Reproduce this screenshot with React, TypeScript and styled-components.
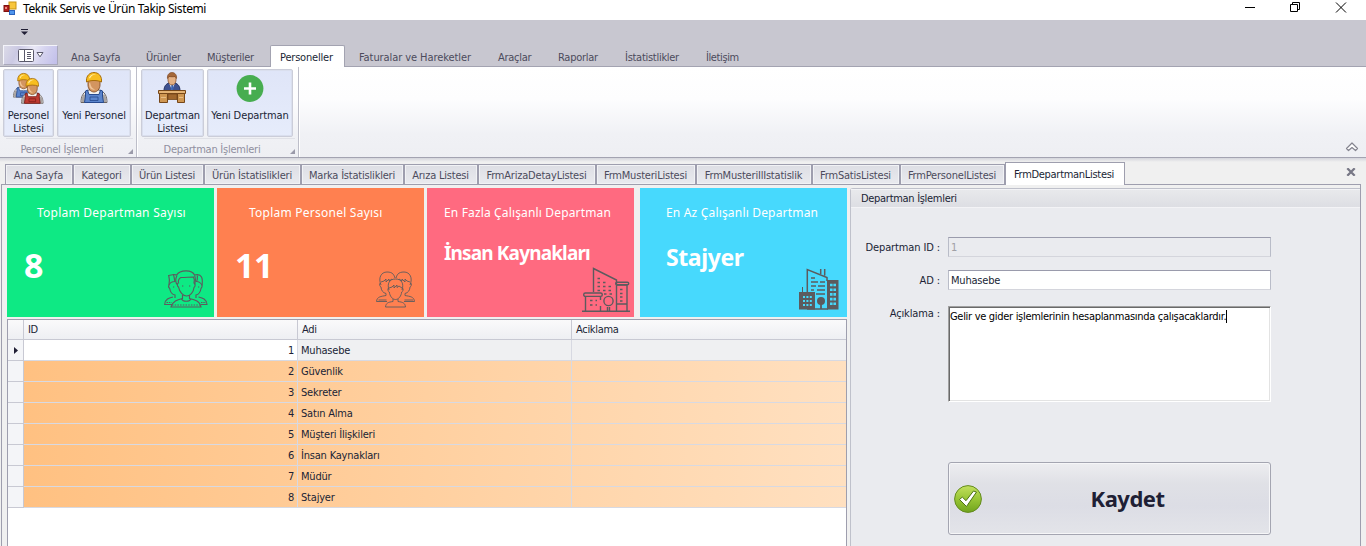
import React from "react";
import styled, { createGlobalStyle, css } from "styled-components";

const ui = `"DejaVu Sans Condensed", "Noto Sans", sans-serif`;
const humanist = `"Noto Sans", "Open Sans", sans-serif`;
const line = "#a3a3b1";

const Global = createGlobalStyle`
  *, *::before, *::after { box-sizing: border-box; }
  html, body { margin: 0; height: 100%; overflow: hidden; }
  body { background: #f0f0f0; font-family: ${ui}; font-size: 11px; line-height: 13px; color: #201f35; }
`;

const Window = styled.div`
  width: 1366px;
  height: 546px;
  display: flex;
  flex-direction: column;
  overflow: hidden;
`;

/* ---------- Title bar ---------- */
const TitleBar = styled.header`
  height: 20px;
  flex: none;
  display: flex;
  align-items: flex-start;
  background: #fff;
  padding: 1px 19px 0 3px;
`;
const AppTitle = styled.span`
  flex: 1;
  margin-left: 6px;
  font: 12px/16px ${humanist};
  letter-spacing: -0.38px;
  color: #000;
  white-space: nowrap;
`;
const WindowButtons = styled.div`
  display: flex;
  gap: 34px;
  svg { display: block; }
`;

/* ---------- Ribbon ---------- */
const QuickAccess = styled.div`
  height: 24px;
  flex: none;
  background: #c8c7d0;
  padding: 9px 0 0 21px;
  svg { display: block; }
`;
const RibbonTabs = styled.nav`
  height: 23px;
  flex: none;
  display: flex;
  align-items: stretch;
  background: #c8c7d0;
  border-bottom: 1px solid ${line};
  padding-left: 3px;
`;
const AppMenu = styled.button`
  width: 55px;
  height: 20px;
  margin: 1px 2px 0 0;
  padding: 0;
  display: flex;
  align-items: center;
  justify-content: center;
  gap: 2px;
  border: 1px solid #a9a8ba;
  border-top-color: #f4f4fa;
  border-left-color: #f4f4fa;
  background: linear-gradient(115deg, #dcdbe8 0%, #cbc9e3 25%, #e9e8f6 50%, #d5d3ef 70%, #c1beea 100%);
`;
const RibbonTab = styled.span<{ $w: number; $active?: boolean; $ls?: number }>`
  width: ${(p) => p.$w}px;
  padding: 7px 0 0 11px;
  white-space: nowrap;
  letter-spacing: ${(p) => p.$ls ?? -0.28}px;
  color: #4c4b5c;
  ${(p) =>
    p.$active &&
    css`
      color: #201f35;
      background: #fff;
      border: 1px solid ${line};
      border-bottom: 0;
      border-radius: 2px 2px 0 0;
      margin: 1px 3px -1px 0;
      padding: 5px 0 0 9px;
    `}
`;
const Ribbon = styled.section`
  height: 91px;
  flex: none;
  display: flex;
  background: linear-gradient(#fff 0%, #fdfdfe 35%, #f0f1f5 75%, #eeeff3 100%);
  border-bottom: 1px solid ${line};
`;
const Group = styled.div<{ $w: number; $pl: number }>`
  width: ${(p) => p.$w}px;
  padding: 2px 0 0 ${(p) => p.$pl}px;
  border-right: 1px solid #bdbec9;
  box-shadow: 1px 0 0 #fff;
`;
const GroupButtons = styled.div`
  display: flex;
  gap: 3px;
`;
const LargeButton = styled.button<{ $w: number }>`
  width: ${(p) => p.$w}px;
  height: 68px;
  padding: 2px 0 0;
  display: flex;
  flex-direction: column;
  align-items: center;
  gap: 5px;
  border: 1px solid #cbcdd9;
  border-radius: 2px;
  background: linear-gradient(#dfe5f8, #e6ecfb);
  box-shadow: inset 0 0 0 1px #dadfee;
  font: 11px/13px ${ui};
  letter-spacing: -0.1px;
  color: #201f35;
  text-align: center;
  white-space: pre-line;
  svg { display: block; flex: none; }
`;
const GroupCaption = styled.div<{ $shift: number }>`
  display: flex;
  align-items: flex-end;
  height: 19px;
  margin: 1px 3px 0 3px;
  border-top: 1px solid #e0e1e7;
  color: #8f8fa0;
  span {
    flex: 1;
    text-align: center;
    letter-spacing: -0.24px;
    padding: 0 ${(p) => p.$shift}px 1px 0;
  }
  svg { display: block; margin-bottom: 3px; }
`;
const RibbonCorner = styled.div`
  flex: 1;
  display: flex;
  justify-content: flex-end;
  align-items: flex-end;
  padding: 0 7px 5px 0;
`;

/* ---------- Document tabs ---------- */
const TabStrip = styled.nav`
  height: 26px;
  flex: none;
  display: flex;
  align-items: flex-end;
  padding-left: 5px;
  padding-right: 10px;
  background: linear-gradient(#d4d5dc 0, #f0f0f0 4px);
`;
const DocTab = styled.span<{ $w: number; $active?: boolean; $ls?: number }>`
  width: ${(p) => p.$w}px;
  height: 20px;
  padding: 1px 1px 0 0;
  display: flex;
  align-items: center;
  justify-content: center;
  white-space: nowrap;
  letter-spacing: ${(p) => p.$ls ?? -0.2}px;
  color: #4c4b5c;
  border: 1px solid #9e9eae;
  border-bottom: 0;
  background: linear-gradient(#dddee4, #e9eaef);
  box-shadow: inset 0 0 0 1px #f1f2f5;
  ${(p) =>
    p.$active &&
    css`
      height: 23px;
      background: #fff;
      color: #201f35;
      box-shadow: none;
      margin-bottom: -1px;
      padding: 0 2px 0 0;
      z-index: 1;
    `}
`;
const CloseTab = styled.span`
  margin: 0 0 8px auto;
  svg { display: block; }
`;
const Body = styled.main`
  flex: 1;
  min-height: 0;
  margin: 0 5px 0 1px;
  border: 1px solid #9e9eae;
  border-bottom: 0;
  padding: 3px 0 0 5px;
  display: flex;
  gap: 3px;
  background: #f0f0f0;
`;
const Left = styled.div`
  width: 840px;
  flex: none;
  display: flex;
  flex-direction: column;
`;

/* ---------- Cards ---------- */
const Cards = styled.div`
  display: flex;
  gap: 3px;
  height: 129px;
  flex: none;
  margin-bottom: 2px;
`;
const Card = styled.div<{ $bg: string; $push?: boolean }>`
  position: relative;
  width: 207px;
  margin-left: ${(p) => (p.$push ? 3 : 0)}px;
  background: ${(p) => p.$bg};
  color: #fff;
  font-family: ${humanist};
  white-space: nowrap;
`;
const CardTitle = styled.div<{ $x: number; $ls: number }>`
  padding: 17px 0 0 ${(p) => p.$x}px;
  font-size: 12px;
  line-height: 16px;
  letter-spacing: ${(p) => p.$ls}px;
`;
const CardValue = styled.div<{ $x: number; $y: number; $size: number; $ls?: number }>`
  padding: ${(p) => p.$y}px 0 0 ${(p) => p.$x}px;
  font-size: ${(p) => p.$size}px;
  line-height: 40px;
  font-weight: 700;
  letter-spacing: ${(p) => p.$ls ?? 0}px;
`;
const CardIcon = styled.div<{ $r: number; $b: number }>`
  position: absolute;
  right: ${(p) => p.$r}px;
  bottom: ${(p) => p.$b}px;
  svg { display: block; }
`;

/* ---------- Data grid ---------- */
const Table = styled.div`
  flex: 1;
  min-height: 0;
  background: #fff;
  border: 1px solid #9e9eae;
  border-bottom: 0;
`;
const columns = "16px 274px 274px 274px";
const HeadRow = styled.div`
  display: grid;
  grid-template-columns: ${columns};
  height: 20px;
  background: linear-gradient(#fafafb, #eeeff3);
  border-bottom: 1px solid #c8c9d3;
`;
const HeadCell = styled.span`
  border-right: 1px solid #c8c9d3;
  padding: 3px 0 0 4px;
  letter-spacing: -0.3px;
  &:last-child { border-right: 0; }
`;
const Row = styled.div<{ $focused?: boolean }>`
  display: grid;
  grid-template-columns: ${columns};
  height: 21px;
  background: ${(p) => (p.$focused ? "#eff0f2" : "linear-gradient(90deg, #ffc080, #ffe0c0)")};
`;
const Indicator = styled.span`
  display: flex;
  align-items: center;
  justify-content: center;
  background: #f4f5f8;
  border-right: 1px solid #c8c9d3;
  border-bottom: 1px solid #c8c9d3;
`;
const Cell = styled.span<{ $num?: boolean; $white?: boolean }>`
  padding: 4px 3px 0 3px;
  border-bottom: 1px solid #d7d9e2;
  border-right: 1px solid #d7d9e2;
  letter-spacing: -0.2px;
  text-align: ${(p) => (p.$num ? "right" : "left")};
  background: ${(p) => (p.$white ? "#fff" : "transparent")};
  &:last-child { border-right: 0; }
`;

/* ---------- Form panel ---------- */
const Panel = styled.section`
  flex: 1;
  min-width: 0;
  background: #eaebef;
  border: 1px solid #bfc1cb;
  border-right: 0;
  border-bottom: 0;
  border-radius: 3px 0 0 0;
`;
const PanelHead = styled.h2`
  height: 19px;
  margin: 0 0 29px;
  padding: 2px 0 0 10px;
  font: 11px/13px ${ui};
  letter-spacing: -0.3px;
  background: linear-gradient(#e8e9ec, #dddee3);
  border-top: 1px solid #f3f3f6;
  border-bottom: 1px solid #f3f3f6;
`;
const Field = styled.div<{ $mb: number }>`
  display: flex;
  margin-bottom: ${(p) => p.$mb}px;
`;
const FieldLabel = styled.label<{ $top?: number }>`
  width: 89px;
  padding-top: ${(p) => p.$top ?? 4}px;
  margin-right: 8px;
  text-align: right;
  letter-spacing: -0.12px;
  white-space: pre;
`;
const Input = styled.div<{ $off?: boolean }>`
  width: 323px;
  height: 20px;
  padding: 3px 0 0 2px;
  letter-spacing: -0.2px;
  border: 1px solid #b9bcc8;
  border-top-color: #9a9bac;
  border-bottom-color: #d4d5dc;
  background: ${(p) => (p.$off ? "#eaebef" : "#fff")};
  color: ${(p) => (p.$off ? "#a0a0a6" : "#201f35")};
`;
const Memo = styled.div`
  width: 323px;
  height: 96px;
  padding: 3px 0 0 1px;
  display: flex;
  align-items: flex-start;
  background: #fff;
  color: #000;
  border: 1px solid #a0a0a0;
  border-right-color: #fff;
  border-bottom-color: #fff;
  box-shadow: inset 1px 1px 0 #696969, inset -1px -1px 0 #e3e3e3;
  letter-spacing: -0.3px;
`;
const Caret = styled.i`
  width: 1px;
  height: 13px;
  background: #000;
`;
const SaveButton = styled.button`
  width: 323px;
  height: 73px;
  margin-left: 97px;
  padding: 0 0 0 5px;
  display: flex;
  align-items: center;
  border: 1px solid #a4a5b1;
  border-radius: 3px;
  background: linear-gradient(#ededf0 0%, #e0e1e6 28%, #dcdde5 60%, #e3e4e9 100%);
  box-shadow: inset 0 0 0 1px #f6f6f8;
  font: 700 22px/28px ${humanist};
  letter-spacing: -0.5px;
  color: #201f35;
  span { flex: 1; text-align: center; padding: 0 0 1px 3px; }
`;

/* ---------- Drawings ---------- */
const FormIcon = () => (
  <svg width="14" height="15" viewBox="0 0 14 15">
    <rect x="6" y="1" width="7" height="7" fill="#f8c63c" stroke="#c99412" />
    <rect x="1" y="4.500" width="5" height="6" fill="#b3201c" stroke="#7d100f" />
    <rect x="2" y="6" width="2" height="2" fill="#ef8b80" />
    <rect x="6.500" y="9.500" width="5" height="4" fill="#4f96ee" stroke="#2a62bd" />
  </svg>
);

const Worker = ({ cloth, dark }: { cloth: string; dark: string }) => (
  <g>
    <path d="M3 30.500c0-6 2-11 8-12.500h10c6 1.500 8 6.500 8 12.500z" fill="#f3f2f0" stroke="#6b6460" strokeWidth="1" />
    <path d="M3.500 30c0-3 .5-6 2-8l3.500 2v6zM28.500 30c0-3-.5-6-2-8l-3.500 2v6z" fill="#aaa5a3" />
    <path d="M9.500 18l1.500 4.500h10l1.500-4.500 2 1v5l1 6.500H6.500l1-6.500v-5z" fill={cloth} stroke={dark} strokeWidth="1" />
    <path d="M12 25h8v3.500h-8z" fill={cloth} stroke={dark} strokeWidth=".8" />
    <path d="M11.500 17l4.500 5 4.500-5-2-2h-5z" fill="#f5f3f0" />
    <path d="M10 8h12v5c0 4-3 7-6 7s-6-3-6-7z" fill="#d39560" stroke="#84502a" strokeWidth=".9" />
    <path d="M12 10.500c1 4 2 6 5 7-4 1-6-2-6-6z" fill="#f0c497" />
    <path d="M8.500 10V8c0-4 3-7.500 7.500-7.500S23.500 4 23.500 8v2c-4-2-11-2-15 0z" fill="#f8be20" stroke="#a86e0a" strokeWidth="1" />
    <path d="M11 6c1-3 4-4.500 7-3.500-3 0-5 1.500-6 4z" fill="#fff0a8" />
  </g>
);
const OneWorker = () => (
  <svg width="32" height="32" viewBox="0 0 32 32"><Worker cloth="#5b85cd" dark="#274a8e" /></svg>
);
const TwoWorkers = () => (
  <svg width="32" height="32" viewBox="0 0 32 32">
    <g transform="translate(-2 1) scale(.79)"><Worker cloth="#5b85cd" dark="#274a8e" /></g>
    <g transform="translate(6 6) scale(.83)"><Worker cloth="#bf3a31" dark="#761a17" /></g>
  </svg>
);
const Desk = () => (
  <svg width="32" height="32" viewBox="0 0 32 32">
    <g transform="translate(-1 0)">
      <path d="M8 19c0-5 2-7 5-8h6c3 1 5 3 5 8z" fill="#3f5290" stroke="#222f5f" />
      <path d="M13 11h6l-3 7z" fill="#eef1f8" />
      <path d="M15.500 12h1.500l.5 5-1.200 1.500L15 17z" fill="#3b65b4" />
      <path d="M12 4.500h8V8c0 3-2 5-4 5s-4-2-4-5z" fill="#e5b184" stroke="#8b5630" strokeWidth=".8" />
      <path d="M11.500 6.500C11 3 13 .5 16 .5s5 2.500 4.500 6L19 4.500c-2 .5-4 .3-6 0z" fill="#a5683a" stroke="#7a4420" strokeWidth=".6" />
      <path d="M2.500 18.500h27v3h-27z" fill="#e3b274" stroke="#764719" />
      <path d="M3.500 21.500h8v9h-8zM21.500 21.500h7v9h-7z" fill="#cf9752" stroke="#764719" />
      <path d="M12 22h9v5.500h-9z" fill="#a1672d" stroke="#764719" strokeWidth=".8" />
      <path d="M5 25.500h5M23 25.500h4" stroke="#e8bd84" />
    </g>
  </svg>
);
const Plus = () => (
  <svg width="32" height="32" viewBox="0 0 32 32">
    <circle cx="16" cy="16.500" r="13.400" fill="#47ad50" />
    <path d="M16 10.500v12M10 16.500h12" stroke="#fff" strokeWidth="2.600" />
  </svg>
);
const Launcher = () => (
  <svg width="5" height="5" viewBox="0 0 5 5"><path d="M5 0v5H0z" fill="#9a9aa9" /></svg>
);

const ink = "#5c5b5e";
const Team = () => (
  <svg width="44" height="38" viewBox="0 0 44 38" fill="none" stroke={ink} strokeWidth="1.150">
    <path d="M5 15c.5-3 .8-6-.3-9.500 2-.3 3-.7 5-1 1 0 2 .3 3 .5C14 2.500 18 .8 22 .8s7.500 1.700 8.500 4.200c3-.8 6 0 7 2 1 2 1 5 .5 8.500" />
    <path d="M9.500 5c1 2 .5 4 1.500 6.500-3 0-5 1-6 3.500-1 2 0 3 .7 3.500.5 3 2.500 6 5.300 6.500v3M33.500 5.500c-.5 2 .5 4-1 6 2 0 4 1 5.500 3.500.5 2-.5 3-1 3.500-.5 3-2.500 6-5 6.500v3" />
    <path d="M13 5.500c-1.500 3-2 6 0 9M30.500 5.500c1.500 3 1 6 0 9" />
    <path d="M14.500 17c-1.500-1-1.500-4 0-4-.5-2.500.5-4.500 2.500-5.500 5 0 8-.5 12.500-.5.800 1.500 1 4 .5 6 1.500 0 1.500 3.500 0 4.500-.5 5-4 8.500-7.500 8.500s-7-4-8-9z" />
    <path d="M18.500 25v3.500c-5 1.200-10 2.500-11.500 8.500h30c-1-6-6-7.300-11.500-8.500V25" />
    <path d="M17.500 29c1.500 3 8 3 9.500 0M9 27c-4 1-8 2-8.300 7.500H8M34.500 27c4 1 8 2 8.500 7.500H37" />
    <path d="M8 35h28" strokeDasharray="1.500 1.200" />
    <path d="M2.500 32.500h5M37 32.500h5M18 16h1.300M25 16h1.300M9 17h1.200M34 17h1.200" strokeDasharray="1.500 .8" />
  </svg>
);
const Trio = () => (
  <svg width="39" height="37" viewBox="0 0 39 37" fill="none" stroke={ink} strokeWidth=".9">
    <path d="M5 14C2 7 5 1 11 1s7 3 8 6M34 14c3-7 0-13-6-13s-7 3-8 6M4.500 12c-1.500 0-1 3.500.5 4 0 3 2 6 5 6.500v2c-5 1-9 1-9.500 6H11M34.500 12c1.500 0 1 3.500-.5 4 0 3-2 6-5 6.500v2c5 1 9 1 9.500 6H28" />
    <path d="M5 11l3-1 2-2v3l3-3v2l3-2M34 11l-3-1-2-2v3l-3-3v2l-3-2" />
    <path d="M13 19c-2-6 0-11 6.500-11S28 13 26 19M12.800 17c-1.500 0-1 3.500.5 4 .5 4 3 7.500 6.200 7.500s5.700-3.500 6.200-7.500c1.500-.5 2-4 .5-4" />
    <path d="M13 17l3-1 2-2v3l3-3v2.500l2-1.500 3 2M17 28v2.500c-5 .7-7 1.500-7.500 5.500h20c-.5-4-2.500-4.800-7.500-5.500V28M2.500 29h8M28.500 29H37" />
  </svg>
);
const CityLine = () => (
  <svg width="48" height="45" viewBox="0 0 48 45" fill="none" stroke={ink} strokeWidth="1.400">
    <path d="M0 44.200h48M11.500 25V1.500l23 11.500v31M34.500 18h10.500v26M34.500 37h10.500" />
    <rect x="33.700" y="15.200" width="13" height="2.600" rx="1.300" />
    <rect x="1.700" y="26" width="18.600" height="3.400" rx="1.700" />
    <path d="M3.500 29.500v14.500M18.500 29.500V33M18.500 39v5M25.500 40v4M27.500 40v4" />
    <circle cx="26.500" cy="34" r="4.600" />
    <path d="M15.500 11.500h4M15.500 15.500h10M15.500 19.500h16M15.500 23.500h16M22 27h9M38 22.500h4M38 26.500h4M38 30h4M38 34h4M8 33.500h7M8 38h7" strokeDasharray="2.500 3" />
  </svg>
);
const CitySolid = () => (
  <svg width="41" height="42" viewBox="0 0 41 42">
    <path d="M1 24h3v-5h1v5h12v17.500H1z" fill={ink} />
    <path d="M29 12h11.500v29.500H29z" fill={ink} />
    <path d="M9.300 24V1.500L29 9.500V13M22.700 6V1M26.700 7.500V1M9 41h21" fill="none" stroke={ink} strokeWidth="1.500" />
    <path d="M13 10h4M13 14h7M22 14h5M13 18h5M20 18h7M13 22h3M19 22h8M18 26h9" stroke={ink} strokeWidth="1.300" />
    <circle cx="23" cy="33" r="4" fill={ink} />
    <path d="M23 34v7" stroke={ink} strokeWidth="1.800" />
    <path d="M5 29h9M5 33h9M5 37h9" stroke="#47d9fa" strokeWidth="2" strokeDasharray="2 1.400" />
    <path d="M32 17h6M32 21.700h6M32 26.400h6M32 31.100h6M32 35.800h6" stroke="#47d9fa" strokeWidth="2.600" strokeDasharray="2.600 .8" />
  </svg>
);
const Check = () => (
  <svg width="28" height="28" viewBox="0 0 28 28">
    <defs>
      <linearGradient id="ok" x1="0" y1="0" x2="0" y2="1">
        <stop offset="0" stopColor="#c3e05f" />
        <stop offset=".5" stopColor="#98c535" />
        <stop offset="1" stopColor="#70a41d" />
      </linearGradient>
    </defs>
    <circle cx="14" cy="14" r="13.400" fill="url(#ok)" stroke="#648b20" strokeWidth="1" />
    <path d="M5.500 14.500l2.800-2.400 3.700 3.600L19.500 6l3 1L12.500 21.500z" fill="#fff" stroke="#4d7314" strokeWidth="1" strokeLinejoin="round" />
  </svg>
);

const ribbonTabs: { t: string; w: number; active?: boolean; ls?: number }[] = [
  { t: "Ana Sayfa", w: 75, ls: -0.05 },
  { t: "Ürünler", w: 61 },
  { t: "Müşteriler", w: 74 },
  { t: "Personeller", w: 75, active: true, ls: -0.2 },
  { t: "Faturalar ve Hareketler", w: 139, ls: -0.08 },
  { t: "Araçlar", w: 60 },
  { t: "Raporlar", w: 67 },
  { t: "İstatistlikler", w: 81 },
  { t: "İletişim", w: 54, ls: -0.4 },
];
const docTabs: { t: string; w: number; ls?: number }[] = [
  { t: "Ana Sayfa", w: 68, ls: -0.05 },
  { t: "Kategori", w: 58 },
  { t: "Ürün Listesi", w: 73 },
  { t: "Ürün İstatislikleri", w: 97 },
  { t: "Marka İstatislikleri", w: 103 },
  { t: "Arıza Listesi", w: 74 },
  { t: "FrmArizaDetayListesi", w: 118 },
  { t: "FrmMusteriListesi", w: 100 },
  { t: "FrmMusteriIlIstatislik", w: 116 },
  { t: "FrmSatisListesi", w: 88 },
  { t: "FrmPersonelListesi", w: 105 },
  { t: "FrmDepartmanListesi", w: 120, ls: -0.3 },
];
const rows = ["Muhasebe", "Güvenlik", "Sekreter", "Satın Alma", "Müşteri İlişkileri", "İnsan Kaynakları", "Müdür", "Stajyer"];

export default function App() {
  return (
    <Window>
      <Global />
      <TitleBar>
        <FormIcon />
        <AppTitle>Teknik Servis ve Ürün Takip Sistemi</AppTitle>
        <WindowButtons>
          <svg width="12" height="13"><path d="M2 6.500h10" stroke="#000" /></svg>
          <svg width="12" height="13" fill="none" stroke="#000"><path d="M1.500 3.500h7v7h-7zM3.500 3.500v-2h7v7h-2" /></svg>
          <svg width="12" height="13"><path d="M1 1.500l10 10M11 1.500l-10 10" stroke="#000" /></svg>
        </WindowButtons>
      </TitleBar>

      <QuickAccess>
        <svg width="7" height="6"><path d="M0 2.500h7L3.500 6z" fill="#201f35" /><path d="M0 .5h7" stroke="#201f35" /></svg>
      </QuickAccess>
      <RibbonTabs>
        <AppMenu>
          <svg width="16" height="13" fill="none" stroke="#5a596b">
            <rect x=".5" y=".5" width="15" height="12" rx="1" fill="#fff" />
            <path d="M6.500 1v11M9 3.500h4M9 5.500h4M9 7.500h4M9 9.500h4" />
          </svg>
          <svg width="8" height="6" fill="#fff" stroke="#5a596b"><path d="M1 .5h6L4 4.800z" /></svg>
        </AppMenu>
        {ribbonTabs.map((r) => (
          <RibbonTab key={r.t} $w={r.w} $active={r.active} $ls={r.ls}>{r.t}</RibbonTab>
        ))}
      </RibbonTabs>
      <Ribbon>
        <Group $w={137} $pl={3}>
          <GroupButtons>
            <LargeButton $w={51}><TwoWorkers />{"Personel\nListesi"}</LargeButton>
            <LargeButton $w={74}><OneWorker />Yeni Personel</LargeButton>
          </GroupButtons>
          <GroupCaption $shift={10}><span>Personel İşlemleri</span><Launcher /></GroupCaption>
        </Group>
        <Group $w={162} $pl={4}>
          <GroupButtons>
            <LargeButton $w={63}><Desk />{"Departman\nListesi"}</LargeButton>
            <LargeButton $w={86}><Plus />Yeni Departman</LargeButton>
          </GroupButtons>
          <GroupCaption $shift={10}><span>Departman İşlemleri</span><Launcher /></GroupCaption>
        </Group>
        <RibbonCorner>
          <svg width="14" height="10" viewBox="0 0 14 10" fill="#fff" stroke="#84848f" strokeWidth="1.200" strokeLinejoin="round">
            <path d="M7 1L1.500 6.500 3.500 8.500 7 5.500l3.500 3 2-2z" />
          </svg>
        </RibbonCorner>
      </Ribbon>

      <TabStrip>
        {docTabs.map((d, i) => (
          <DocTab key={d.t} $w={d.w} $ls={d.ls} $active={i === docTabs.length - 1}>{d.t}</DocTab>
        ))}
        <CloseTab>
          <svg width="10" height="8"><path d="M1.300 .3l7.400 7.400M8.700 .3l-7.400 7.400" stroke="#777785" strokeWidth="2.300" /></svg>
        </CloseTab>
      </TabStrip>
      <Body>
        <Left>
          <Cards>
            <Card $bg="#0ee984">
              <CardTitle $x={30} $ls={0.24}>Toplam Departman Sayısı</CardTitle>
              <CardValue $x={17} $y={24} $size={34}>8</CardValue>
              <CardIcon $r={6} $b={9}><Team /></CardIcon>
            </Card>
            <Card $bg="#ff8050">
              <CardTitle $x={32} $ls={0.24}>Toplam Personel Sayısı</CardTitle>
              <CardValue $x={18} $y={24} $size={34} $ls={-0.5}>11</CardValue>
              <CardIcon $r={9} $b={9}><Trio /></CardIcon>
            </Card>
            <Card $bg="#ff6a80">
              <CardTitle $x={17} $ls={0.15}>En Fazla Çalışanlı Departman</CardTitle>
              <CardValue $x={17} $y={12} $size={19} $ls={-0.85}>İnsan Kaynakları</CardValue>
              <CardIcon $r={4} $b={5}><CityLine /></CardIcon>
            </Card>
            <Card $bg="#47d9fd" $push>
              <CardTitle $x={26} $ls={0.18}>En Az Çalışanlı Departman</CardTitle>
              <CardValue $x={26} $y={16} $size={23} $ls={-0.4}>Stajyer</CardValue>
              <CardIcon $r={8} $b={7}><CitySolid /></CardIcon>
            </Card>
          </Cards>
          <Table>
            <HeadRow>
              <HeadCell />
              <HeadCell>ID</HeadCell>
              <HeadCell>Adi</HeadCell>
              <HeadCell>Aciklama</HeadCell>
            </HeadRow>
            {rows.map((r, i) => (
              <Row key={r} $focused={i === 0}>
                <Indicator>
                  {i === 0 && <svg width="4" height="7"><path d="M0 0l4 3.500L0 7z" fill="#201f35" /></svg>}
                </Indicator>
                <Cell $num $white={i === 0}>{i + 1}</Cell>
                <Cell>{r}</Cell>
                <Cell />
              </Row>
            ))}
          </Table>
        </Left>
        <Panel>
          <PanelHead>Departman İşlemleri</PanelHead>
          <Field $mb={13}>
            <FieldLabel>Departman ID :</FieldLabel>
            <Input $off>1</Input>
          </Field>
          <Field $mb={16}>
            <FieldLabel>AD :</FieldLabel>
            <Input>Muhasebe</Input>
          </Field>
          <Field $mb={60}>
            <FieldLabel $top={1}>Açıklama :</FieldLabel>
            <Memo>Gelir ve gider işlemlerinin hesaplanmasında çalışacaklardır.<Caret /></Memo>
          </Field>
          <SaveButton><Check /><span>Kaydet</span></SaveButton>
        </Panel>
      </Body>
    </Window>
  );
}
